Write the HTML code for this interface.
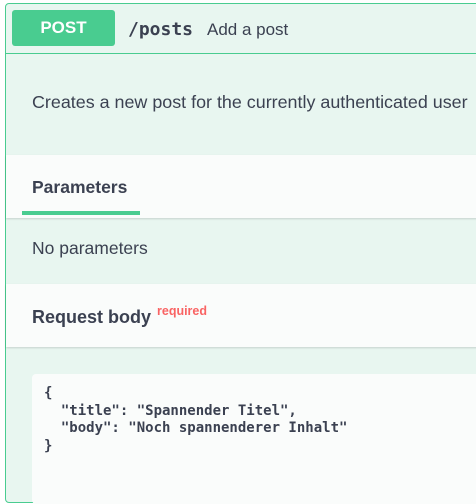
<!DOCTYPE html>
<html><head><style>
*{margin:0;padding:0;box-sizing:border-box}
body{width:476px;height:490px;overflow:hidden;background:#fff;font-family:"Liberation Sans",sans-serif;color:#3b4151;position:relative}
.op{position:absolute;left:5px;top:3px;width:480px;height:500px;border:1px solid #49cc90;border-radius:4px;background:#e8f6f0}
.hdr{position:absolute;left:0;top:0;width:100%;height:50px;border-bottom:1px solid #49cc90}
.badge{position:absolute;left:6px;top:6px;width:103px;height:36px;background:#49cc90;border-radius:3px;color:#fff;font-weight:bold;font-size:17px;text-align:center;line-height:36px}
.path{position:absolute;left:122px;top:15px;font-family:"DejaVu Sans Mono","Liberation Mono",monospace;font-weight:bold;font-size:18px}
.sum{position:absolute;left:201px;top:16px;font-size:17px}
.t{position:absolute;font-size:17.5px}
.sec{position:absolute;left:0;width:100%;background:#fafcfb;box-shadow:0 1px 2px rgba(0,0,0,.15)}
.code{position:absolute;left:32px;top:374px;width:460px;height:130px;background:#fafcfb;border-radius:4px;font-family:"DejaVu Sans Mono","Liberation Mono",monospace;font-weight:bold;font-size:14px;line-height:17.5px;padding:11px 0 0 12px;white-space:pre;color:#3b4151}
</style></head><body>
<div class="op">
<div class="hdr"><div class="badge">POST</div><div class="path">/posts</div><div class="sum">Add a post</div></div>
<div class="t" style="left:26px;top:88px;font-size:17.9px">Creates a new post for the currently authenticated user</div>
<div class="sec" style="top:151px;height:63px"><div class="t" style="left:26px;top:22px;font-weight:bold">Parameters</div><div style="position:absolute;left:16px;top:56px;width:118px;height:4px;background:#49cc90"></div></div>
<div class="t" style="left:26px;top:234px">No parameters</div>
<div class="sec" style="top:280px;height:63px"><div class="t" style="left:26px;top:23px;font-weight:bold;font-size:18px">Request body</div><div style="position:absolute;left:151px;top:20px;font-size:12.5px;font-weight:bold;color:#f93e3e;opacity:.8">required</div></div>
</div>
<div class="code">{
  "title": "Spannender Titel",
  "body": "Noch spannenderer Inhalt"
}</div>
</body></html>
